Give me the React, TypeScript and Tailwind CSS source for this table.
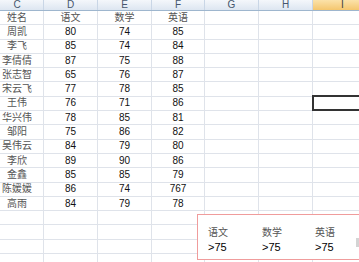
import React from "react"

const cols = [
    { key: "C", w: "w-[44px] pr-[9px]" },
    { key: "D", w: "w-[54px]" },
    { key: "E", w: "w-[54px]" },
    { key: "F", w: "w-[53px]" },
    { key: "G", w: "w-[54px]" },
    { key: "H", w: "w-[54px]" },
    { key: "I", w: "w-[60px]" },
]

const rows: string[][] = [
    ["姓名", "语文", "数学", "英语"],
    ["周凯", "80", "74", "85"],
    ["李飞", "85", "74", "84"],
    ["李倩倩", "87", "75", "88"],
    ["张志智", "65", "76", "87"],
    ["宋云飞", "77", "78", "85"],
    ["王伟", "76", "71", "86"],
    ["华兴伟", "78", "85", "81"],
    ["邹阳", "75", "86", "82"],
    ["吴伟云", "84", "79", "80"],
    ["李欣", "89", "90", "86"],
    ["金鑫", "85", "85", "79"],
    ["陈媛媛", "86", "74", "767"],
    ["高雨", "84", "79", "78"],
    [], [], [], [],
]

const App = () => {
    return (
        <div className="relative w-[359px] h-[262px] overflow-hidden bg-white" style={{ fontFamily: '"Liberation Sans", "Noto Sans CJK SC", sans-serif' }}>
            {/* column headers */}
            <div className="flex h-[11px] border-b border-[#9eb6ce]">
                {cols.map((c) => (
                    <div key={c.key}
                        className={`${c.w} shrink-0 flex items-center justify-center border-r text-[10px] leading-none ${c.key === "I" ? "bg-gradient-to-b from-[#fbe2a9] to-[#f4c66d] border-[#e8b45a] text-[#3d3d3d]" : "bg-gradient-to-b from-[#f4f7fb] to-[#dde6f1] border-[#c9d6e6] text-[#46566e]"}`}>
                        {c.key}
                    </div>
                ))}
            </div>
            {rows.map((r, i) => (
                <div key={i} className="flex h-[14.3px]">
                    {cols.map((c, j) => (
                        <div key={c.key}
                            className={`${c.w} shrink-0 flex items-center justify-center border-r border-b border-[#dfe3ea] leading-none whitespace-nowrap ${j === 0 || i === 0 ? "text-[10px] text-[#555]" : "text-[10px] text-[#111]"}`}>
                            {r[j] ?? ""}
                        </div>
                    ))}
                </div>
            ))}

            {/* active cell */}
            <div className="absolute left-[312px] top-[95px] w-[60px] h-[16px] border-2 border-[#333]" />

            {/* condition box */}
            <div className="absolute left-[197px] top-[214px] w-[180px] h-[46px] border border-[#f09c9c] bg-white">
                <div className="flex mt-[10px] ml-[10px] h-[15px] items-center text-[10px] text-[#555]">
                    <div className="w-[54px]">语文</div>
                    <div className="w-[53px]">数学</div>
                    <div className="w-[54px]">英语</div>
                </div>
                <div className="flex ml-[10px] h-[14px] items-center text-[11px] text-black">
                    <div className="w-[54px]">&gt;75</div>
                    <div className="w-[53px]">&gt;75</div>
                    <div className="w-[54px]">&gt;75</div>
                </div>
            </div>
            <div className="absolute left-[356px] top-[238px] w-[3px] h-[9px] bg-[#d4d4d4]" />
        </div>
    )
}

export default App
